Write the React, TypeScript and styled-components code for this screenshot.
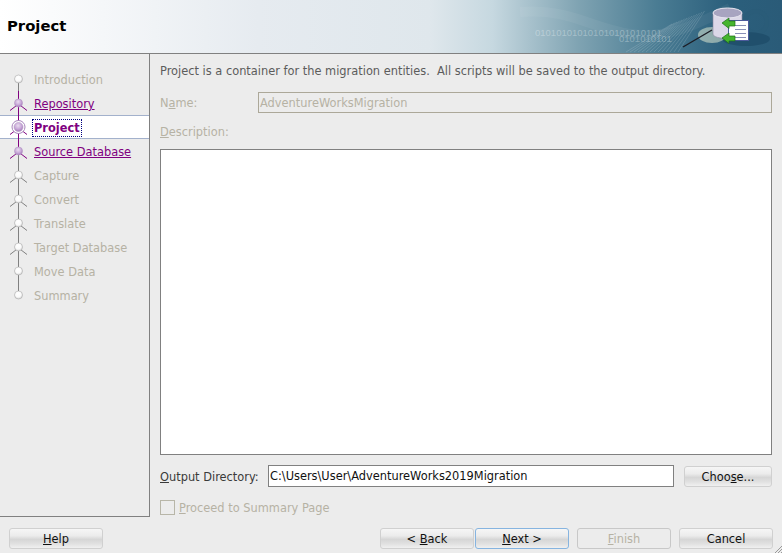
import styled, { createGlobalStyle } from "styled-components";

const Global = createGlobalStyle`
    html, body {
        margin: 0;
        padding: 0;
        background: #ececec;
    }
    body {
        font-family: "DejaVu Sans", Tahoma, sans-serif;
        font-size: 11.4px;
        color: #1c1c1c;
    }
`;

const Wizard = styled.div`
    width: 782px;
    height: 553px;
    display: flex;
    flex-direction: column;
    overflow: hidden;
    position: relative;
    background: #ececec;
`;

const Header = styled.header`
    height: 53px;
    flex: none;
    display: flex;
    align-items: center;
    padding-left: 7px;
    position: relative;
    border-bottom: 1px solid #808080;
    background: linear-gradient(90deg, #ffffff 0%, #e6ebf0 33%, #dfe7ec 55%, #c6d8e0 63%, #7fa3b2 74%, #4a7c93 84%, #2b5f7c 93%, #2a5b78 100%);
`;

const Title = styled.h1`
    margin: 0 0 2px;
    font-size: 14.8px;
    font-weight: bold;
    color: #000;
`;

const HeaderArt = styled.svg`
    position: absolute;
    right: 0;
    top: 0;
`;

const Body = styled.div`
    flex: none;
    height: 463px;
    display: flex;
`;

const Sidebar = styled.nav`
    width: 150px;
    flex: none;
    padding-top: 13px;
    box-sizing: border-box;
    border-right: 1px solid #808080;
    border-bottom: 1px solid #808080;
`;

const StepRow = styled.div<{ $current?: boolean }>`
    height: 24px;
    box-sizing: border-box;
    display: flex;
    align-items: center;
    background: ${p => (p.$current ? "#ffffff" : "transparent")};
    border-top: ${p => (p.$current ? "1px solid #a3b1cc" : "none")};
    border-bottom: ${p => (p.$current ? "1px solid #a3b1cc" : "none")};
`;

const StepMark = styled.svg`
    width: 34px;
    height: 24px;
    flex: none;
    margin: -1px 0;
`;

const StepLabel = styled.span<{ $state: "off" | "visited" | "current" }>`
    margin-top: 2px;
    color: ${p => (p.$state === "off" ? "#b6b2a4" : "#800080")};
    font-weight: ${p => (p.$state === "current" ? "bold" : "normal")};
    text-decoration: ${p => (p.$state === "visited" ? "underline" : "none")};
    outline: ${p => (p.$state === "current" ? "1px dotted #000080" : "none")};
    outline-offset: 1px;
    white-space: nowrap;
`;

const Main = styled.main`
    flex: 1;
    display: flex;
    flex-direction: column;
    padding: 9px 10px 0 10px;
    min-width: 0;
`;

const Intro = styled.p`
    margin: 0;
    height: 16px;
    line-height: 16px;
    color: #5c5c5c;
    white-space: pre;
`;

const NameRow = styled.div`
    display: flex;
    align-items: center;
    margin-top: 13px;
`;

const FieldLabel = styled.label<{ $off?: boolean; $width?: number }>`
    color: ${p => (p.$off ? "#b6b2a4" : "#3a3a3a")};
    width: ${p => (p.$width ? `${p.$width}px` : "auto")};
    flex: none;
    white-space: nowrap;
    padding-top: 1px;
    box-sizing: border-box;
`;

const DisabledInput = styled.div`
    flex: 1;
    height: 21px;
    box-sizing: border-box;
    line-height: 20px;
    padding-left: 1px;
    border: 1px solid #aca899;
    color: #b6b2a4;
`;

const DescriptionLabel = styled(FieldLabel)`
    margin-top: 10px;
    height: 16px;
    line-height: 16px;
`;

const TextArea = styled.div`
    height: 306px;
    flex: none;
    box-sizing: border-box;
    margin-top: 10px;
    background: #fff;
    border: 1px solid #808080;
`;

const OutputRow = styled.div`
    display: flex;
    align-items: center;
    margin-top: 10px;
`;

const PathInput = styled.div`
    width: 406px;
    flex: none;
    height: 22px;
    box-sizing: border-box;
    line-height: 21px;
    padding-left: 1px;
    background: #fff;
    border: 1px solid #808080;
    color: #111;
`;

const CheckRow = styled.div`
    display: flex;
    align-items: center;
    gap: 4px;
    margin-top: 13px;
    color: #b6b2a4;
`;

const CheckBox = styled.span`
    width: 15px;
    height: 15px;
    box-sizing: border-box;
    border: 1px solid #b8b6a8;
    background: #ececec;
`;

const Footer = styled.footer`
    flex: 1;
    display: flex;
    align-items: flex-start;
    padding: 11px 9px 0;
`;

const Button = styled.div<{ $variant?: "default" | "disabled"; $gapLeft?: number }>`
    width: 94px;
    height: 21px;
    flex: none;
    box-sizing: border-box;
    display: flex;
    align-items: center;
    justify-content: center;
    border-radius: 3px;
    margin-left: ${p => p.$gapLeft ?? 0}px;
    color: ${p => (p.$variant === "disabled" ? "#b6b2a4" : "#111")};
    border: 1px solid ${p => (p.$variant === "default" ? "#86b4e0" : p.$variant === "disabled" ? "#c8c8c8" : "#d0d0d0")};
    background: ${p =>
        p.$variant === "disabled"
            ? "#ececec"
            : "linear-gradient(180deg, #f6f6f6 0%, #ececec 35%, #d6d6d6 55%, #e2e2e2 80%, #f0f0f0 100%)"};
`;

const ChooseButton = styled(Button)`
    width: 88px;
    margin-left: 10px;
    margin-top: 1px;
`;

const Spacer = styled.div`
    flex: 1;
`;

const Grip = styled.svg`
    position: absolute;
    right: 0;
    bottom: 0;
`;

type StepState = "off" | "visited" | "current";

const steps: { name: string; state: StepState; legs: boolean; top?: string; bottom?: string }[] = [
    { name: "Introduction", state: "off", legs: false, bottom: "#808080" },
    { name: "Repository", state: "visited", legs: true, top: "#800080", bottom: "#800080" },
    { name: "Project", state: "current", legs: true, top: "#800080", bottom: "#800080" },
    { name: "Source Database", state: "visited", legs: true, top: "#800080", bottom: "#808080" },
    { name: "Capture", state: "off", legs: true, top: "#808080", bottom: "#808080" },
    { name: "Convert", state: "off", legs: true, top: "#808080", bottom: "#808080" },
    { name: "Translate", state: "off", legs: true, top: "#808080", bottom: "#808080" },
    { name: "Target Database", state: "off", legs: true, top: "#808080", bottom: "#808080" },
    { name: "Move Data", state: "off", legs: false, top: "#808080", bottom: "#808080" },
    { name: "Summary", state: "off", legs: false, top: "#808080" },
];

function StepIcon({ state, legs, top, bottom }: { state: StepState; legs: boolean; top?: string; bottom?: string }) {
    const lit = state !== "off";
    const stroke = lit ? "#800080" : "#808080";
    return (
        <StepMark viewBox="0 0 34 24">
            <defs>
                <radialGradient id={`ball-${state}`} cx="0.45" cy="0.35" r="0.7">
                    <stop offset="0" stopColor={lit ? "#eadcf0" : "#ffffff"} />
                    <stop offset="0.55" stopColor={lit ? "#c8a8d8" : "#fafafa"} />
                    <stop offset="1" stopColor={lit ? "#9c6cb4" : "#d0d0d0"} />
                </radialGradient>
            </defs>
            {top && <line x1="18.5" y1="0" x2="18.5" y2="12" stroke={top} />}
            {bottom && <line x1="18.5" y1="12" x2="18.5" y2="24" stroke={bottom} />}
            {legs && <path d="M10 19.5 L18.5 13 L27 19.5" fill="none" stroke={stroke} strokeWidth="1" />}
            {state === "current" && <circle cx="18.5" cy="12" r="6.5" fill="#fff" stroke="#a884bc" />}
            <circle cx="18.5" cy="12" r={state === "current" ? 4.5 : 4} fill={`url(#ball-${state})`} stroke={lit ? "#b59ac4" : "#a8a8a8"} strokeWidth="0.6" />
        </StepMark>
    );
}

const hatch = Array.from({ length: 14 }, (_, i) => i);

function HeaderDecoration() {
    return (
        <HeaderArt width="302" height="53" viewBox="0 0 302 53">
            <path d="M40 12 C90 8 110 28 150 34 C190 40 220 22 250 8" fill="none" stroke="#ffffff" strokeOpacity="0.05" strokeWidth="10" />
            {hatch.map(i => (
                <line key={i} x1={146 + i * 4} y1="52" x2={192 + i * 2.5} y2={24 - i} stroke="#ffffff" strokeOpacity="0.14" />
            ))}
            <text x="55" y="36" fontFamily="'Liberation Sans', sans-serif" fontSize="9.5" fill="#ffffff" fillOpacity="0.3">010101010101010101010101</text>
            <text x="139" y="42" fontFamily="'Liberation Sans', sans-serif" fontSize="9.5" fill="#ffffff" fillOpacity="0.3">0101010101</text>
            <circle cx="276" cy="22" r="11" fill="none" stroke="#2a5b78" strokeOpacity="0.5" strokeWidth="4" />
            <ellipse cx="266" cy="39" rx="24" ry="7" fill="#1c4a66" fillOpacity="0.7" />
            <ellipse cx="232" cy="35" rx="14" ry="8" fill="#eef3d8" fillOpacity="0.5" />
            <line x1="203" y1="47" x2="232" y2="30" stroke="#1c1c24" strokeWidth="1.4" />
            <path d="M233 13 V34 C233 40 262 40 262 34 V13 Z" fill="#dcd8e8" stroke="#8a86a0" strokeWidth="0.6" />
            <ellipse cx="247.5" cy="13" rx="14.5" ry="5" fill="#a8a4c0" stroke="#e8e6f0" strokeWidth="1" />
            <rect x="248.5" y="20.5" width="20" height="20" fill="#ffffff" stroke="#4c5a9c" />
            <path d="M255 25.5 H266 M255 29.5 H266 M255 33.5 H266 M255 37.5 H266" stroke="#8a90b8" />
            <path d="M242 23 L249 18 V21 H255 V26 H249 V28.5 Z" fill="#46b52e" stroke="#1d6e18" strokeWidth="0.7" />
            <path d="M242 38 L249 33 V36 H255 V41 H249 V43.5 Z" fill="#46b52e" stroke="#1d6e18" strokeWidth="0.7" />
        </HeaderArt>
    );
}

export default function App() {
    return (
        <Wizard>
            <Global />
            <Header>
                <Title>Project</Title>
                <HeaderDecoration />
            </Header>
            <Body>
                <Sidebar>
                    {steps.map(step => (
                        <StepRow key={step.name} $current={step.state === "current"}>
                            <StepIcon state={step.state} legs={step.legs} top={step.top} bottom={step.bottom} />
                            <StepLabel $state={step.state}>{step.name}</StepLabel>
                        </StepRow>
                    ))}
                </Sidebar>
                <Main>
                    <Intro>Project is a container for the migration entities.  All scripts will be saved to the output directory.</Intro>
                    <NameRow>
                        <FieldLabel $off $width={98}>N<u>a</u>me:</FieldLabel>
                        <DisabledInput>AdventureWorksMigration</DisabledInput>
                    </NameRow>
                    <DescriptionLabel $off><u>D</u>escription:</DescriptionLabel>
                    <TextArea />
                    <OutputRow>
                        <FieldLabel $width={108}><u>O</u>utput Directory:</FieldLabel>
                        <PathInput>C:\Users\User\AdventureWorks2019Migration</PathInput>
                        <ChooseButton><span>Choo<u>s</u>e...</span></ChooseButton>
                    </OutputRow>
                    <CheckRow>
                        <CheckBox />
                        <span><u>P</u>roceed to Summary Page</span>
                    </CheckRow>
                </Main>
            </Body>
            <Footer>
                <Button><span><u>H</u>elp</span></Button>
                <Spacer />
                <Button><span>&lt; <u>B</u>ack</span></Button>
                <Button $variant="default" $gapLeft={1}><span><u>N</u>ext &gt;</span></Button>
                <Button $variant="disabled" $gapLeft={8}><span><u>F</u>inish</span></Button>
                <Button $gapLeft={8}>Cancel</Button>
            </Footer>
            <Grip width="8" height="8" viewBox="0 0 8 8">
                <path d="M8 1 L1 8 M8 4 L4 8 M8 7 L7 8" stroke="#9a9a9a" />
            </Grip>
        </Wizard>
    );
}
